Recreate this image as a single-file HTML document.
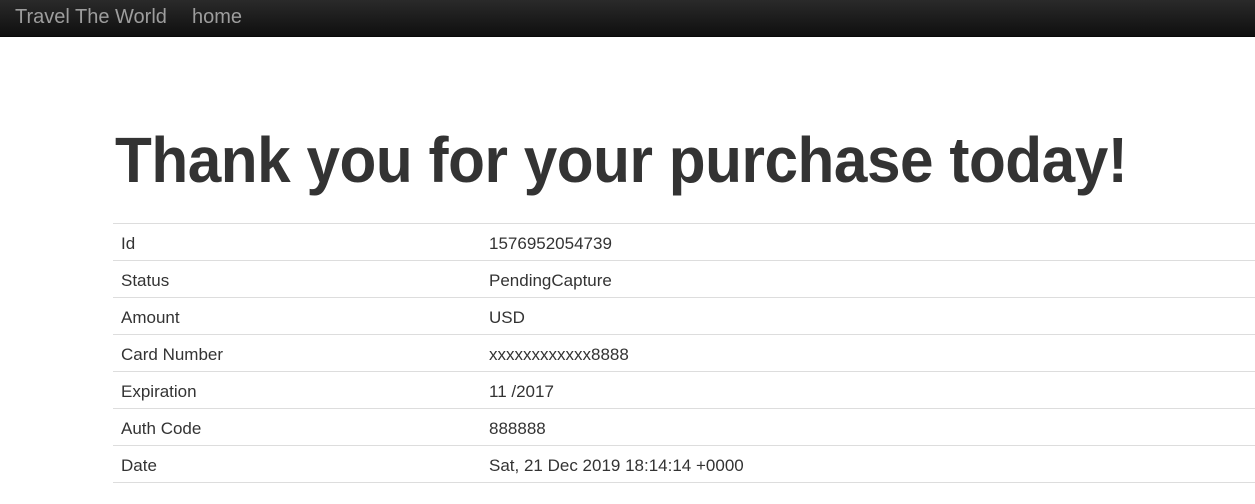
<!DOCTYPE html>
<html><head><meta charset="utf-8"><style>
body{margin:0;font-family:"Liberation Sans",sans-serif;background:#fff;color:#333;width:1255px;height:504px;overflow:hidden}
.nav{height:36px;background:linear-gradient(#2a2a2a,#0f0f0f);border-bottom:1px solid #080808;position:relative}
.nav span{position:absolute;top:6px;font-size:20px;color:#9d9d9d}
h1{margin:0;position:absolute;left:115px;top:123px;font-size:64px;font-weight:bold;color:#333;white-space:nowrap;transform:scaleX(0.942);transform-origin:left;letter-spacing:-0.5px}
table{position:absolute;left:113px;top:223px;width:1142px;border-collapse:collapse;font-size:17px}
td{height:37px;border-top:1px solid #ddd;padding:3px 0 0 8px;box-sizing:border-box;vertical-align:middle}
tr:last-child td{border-bottom:1px solid #ddd}
td:first-child{width:368px}
</style></head><body>
<div class="nav"><span style="left:15px">Travel The World</span><span style="left:192px">home</span></div>
<h1>Thank you for your purchase today!</h1>
<table>
<tr><td>Id</td><td>1576952054739</td></tr>
<tr><td>Status</td><td>PendingCapture</td></tr>
<tr><td>Amount</td><td>USD</td></tr>
<tr><td>Card Number</td><td>xxxxxxxxxxxx8888</td></tr>
<tr><td>Expiration</td><td>11 /2017</td></tr>
<tr><td>Auth Code</td><td>888888</td></tr>
<tr><td>Date</td><td>Sat, 21 Dec 2019 18:14:14 +0000</td></tr>
</table>
</body></html>
